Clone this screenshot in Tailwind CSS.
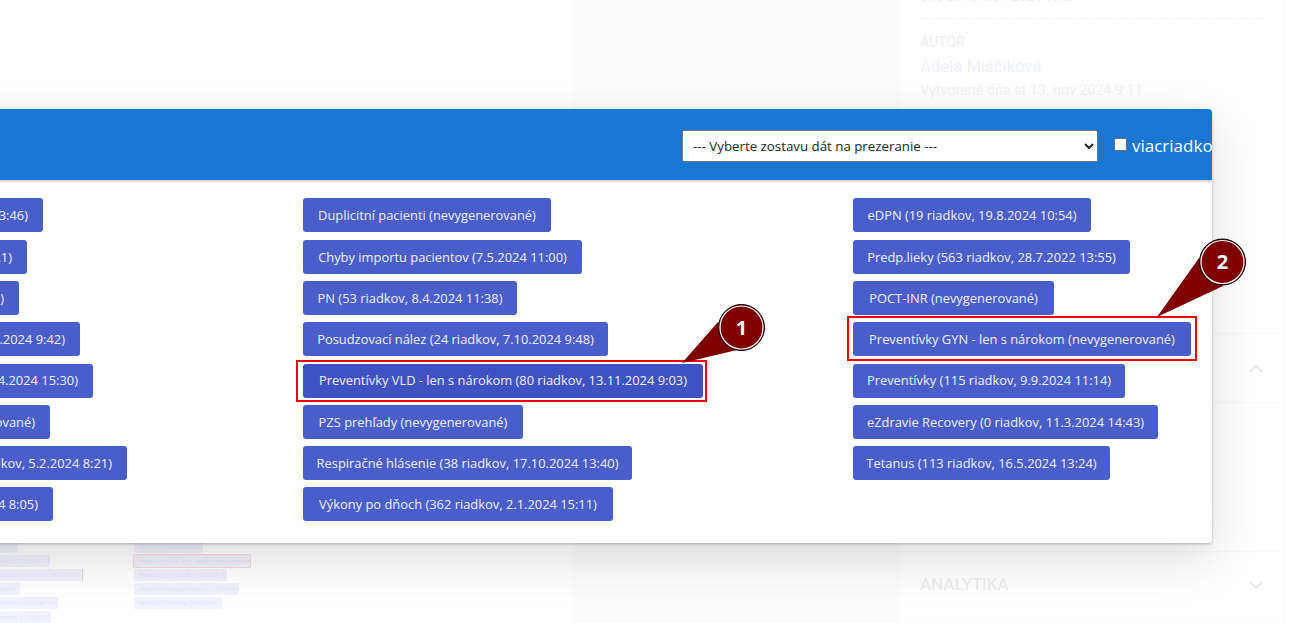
<!DOCTYPE html>
<html lang="sk">
<head>
  <meta charset="UTF-8">
  <title>Zostavy</title>
  <script src="https://cdn.jsdelivr.net/npm/@tailwindcss/browser@4"></script>
</head>
<body class="bg-white overflow-hidden font-['Open_Sans',sans-serif]">
<div class="relative w-[1305px] h-[623px] overflow-hidden bg-white">

  <!-- stranka za oknom -->
  <div class="absolute left-[573px] top-0 w-[326px] h-[623px] bg-[#fcfcfc]"></div>
  <div class="absolute left-[899px] top-[-30px] w-[385px] h-[700px] bg-white border-x border-[#fafafa] font-['Roboto',sans-serif]">
    <div class="mx-5 pt-[16px] pb-[12px] border-b border-dashed border-[#f0f0f0] text-[#f0f0f0] text-sm">dňa st 13. nov 2024 9:12</div>
    <div class="mx-5 mt-[13px] text-sm leading-5 text-[#eeeeee]">AUTOR</div>
    <div class="mx-5 mt-[3px] text-[16.7px] leading-6 text-[#edf2fd]">Adela Miščiková</div>
    <div class="mx-5 mt-[1px] text-[14.3px] leading-5 text-[#f3f3f3]">Vytvorené dňa st 13. nov 2024 9:11</div>
    <div class="mt-[233px] h-[70px] border-y border-[#f8f8f8] flex items-center justify-end pr-[20px]">
      <svg width="14" height="9" viewBox="0 0 14 9" fill="none" stroke="#e8ebee" stroke-width="2"><path d="M1 8l6-6 6 6"/></svg>
    </div>
    <div class="h-[148px]"></div>
    <div class="h-[68px] border-y border-[#f8f8f8] flex items-center justify-between pl-[20px] pr-[20px]">
      <span class="text-[17px] text-[#ebebeb]">ANALYTIKA</span>
      <svg width="14" height="9" viewBox="0 0 14 9" fill="none" stroke="#e8ebee" stroke-width="2"><path d="M1 1l6 6 6-6"/></svg>
    </div>
  </div>

  <!-- zmensena kopia obrazka pod oknom -->
  <div class="absolute left-0 top-[541px] w-[260px] grid grid-cols-[134px_1fr] text-[5px] leading-[12px] text-[#4a5ec9]/10 blur-[0.7px] whitespace-nowrap">
    <div class="flex flex-col w-[84px] gap-[2px] overflow-hidden">
      <div class="h-[12px] w-[18px] bg-[#4a5ec9]/8 overflow-hidden">8:41</div>
      <div class="h-[12px] w-[50px] bg-[#4a5ec9]/8 overflow-hidden">adkov, 7.10.2024 9:48</div>
      <div class="h-[12px] w-[83px] bg-[#4a5ec9]/8 border-r border-[#f00000]/15 overflow-hidden">nárokom (80 riadkov, 13.11.2024 9:03)</div>
      <div class="h-[12px] w-[20px] bg-[#4a5ec9]/8 overflow-hidden">rované</div>
      <div class="h-[12px] w-[58px] bg-[#4a5ec9]/8 overflow-hidden">riadkov, 17.10.2024 13:40</div>
      <div class="h-[12px] w-[51px] bg-[#4a5ec9]/8 overflow-hidden">riadkov, 2.1.2024 15:11</div>
    </div>
    <div class="flex flex-col items-start gap-[2px] pr-[2px]">
      <div class="h-[12px] w-[69px] bg-[#4a5ec9]/8 overflow-hidden pl-[5px]">POCT-INR (nevygenerované)</div>
      <div class="h-[12px] w-[116px] bg-[#4a5ec9]/8 outline outline-[#f00000]/15 overflow-hidden pl-[5px]">Preventívky GYN - len s nárokom (nevygenerované)</div>
      <div class="h-[12px] w-[93px] bg-[#4a5ec9]/8 overflow-hidden pl-[5px]">Preventívky (115 riadkov, 9.9.2024 11:14)</div>
      <div class="h-[12px] w-[105px] bg-[#4a5ec9]/8 overflow-hidden pl-[5px]">eZdravie Recovery (0 riadkov, 11.3.2024 14:43)</div>
      <div class="h-[12px] w-[88px] bg-[#4a5ec9]/8 overflow-hidden pl-[5px]">Tetanus (113 riadkov, 16.5.2024 13:24)</div>
    </div>
  </div>

  <!-- okno -->
  <div class="absolute left-[-262px] top-[109px] w-[1474px] h-[434px] bg-white rounded-[4px] overflow-hidden shadow-[0_1px_3px_rgba(0,0,0,0.25),0_16px_50px_rgba(0,0,0,0.14)]">
    <div class="h-[71px] bg-[#1976d2] flex items-center pt-[3px] pl-[944px] shadow-[0_1px_3px_rgba(0,0,0,0.3)]">
      <select class="shrink-0 w-[416px] h-[32px] bg-white border border-[#767676] rounded-[2px] pl-[6px] text-[13.3px] text-[#212529]">
        <option>--- Vyberte zostavu dát na prezeranie ---</option>
      </select>
      <label class="flex items-center ml-[16px] text-white text-[17px] whitespace-nowrap">
        <span class="w-[13px] h-[13px] bg-white border border-[#767676] rounded-[2px] mr-[5px] mb-[3px]"></span>viacriadkov
      </label>
    </div>

    <div class="grid grid-cols-[565px_550px_1fr] pt-[18.4px] text-[12.9px] text-[#eef0fc]">
      <!-- prvy stlpec, zlava odrezany okrajom okna -->
      <div class="flex flex-col gap-[7.3px] pl-[15px]">
        <div class="w-[290px] h-[34px] pt-px flex items-center justify-end px-[15px] rounded-[3px] bg-[#4a5ec9] overflow-hidden whitespace-nowrap">Analýza (12 riadkov, 3.5.2024 13:46)</div>
        <div class="w-[274px] h-[34px] pt-px flex items-center justify-end px-[15px] rounded-[3px] bg-[#4a5ec9] overflow-hidden whitespace-nowrap">Ambulancia (8 riadkov, 3.5.2024 8:21)</div>
        <div class="w-[266px] h-[34px] pt-px flex items-center justify-end px-[15px] rounded-[3px] bg-[#4a5ec9] overflow-hidden whitespace-nowrap">Dekurzy (nevygenerované 0)</div>
        <div class="w-[327px] h-[34px] pt-px flex items-center justify-end px-[15px] rounded-[3px] bg-[#4a5ec9] overflow-hidden whitespace-nowrap">Diagnózy (240 riadkov, 7.10.2024 9:42)</div>
        <div class="w-[340px] h-[34px] pt-px flex items-center justify-end px-[15px] rounded-[3px] bg-[#4a5ec9] overflow-hidden whitespace-nowrap">Dispenzarizácia (31 riadkov, 24.4.2024 15:30)</div>
        <div class="w-[297px] h-[34px] pt-px flex items-center justify-end px-[15px] rounded-[3px] bg-[#4a5ec9] overflow-hidden whitespace-nowrap">Očkovanie (nevygenerované)</div>
        <div class="w-[374px] h-[34px] pt-px flex items-center justify-end px-[15px] rounded-[3px] bg-[#4a5ec9] overflow-hidden whitespace-nowrap">Objednávky pacientov (95 riadkov, 5.2.2024 8:21)</div>
        <div class="w-[300px] h-[34px] pt-px flex items-center justify-end px-[15px] rounded-[3px] bg-[#4a5ec9] overflow-hidden whitespace-nowrap">Pacienti (87 riadkov, 2.1.2024 8:05)</div>
      </div>

      <div class="flex flex-col items-start gap-[7.3px]">
        <div class="w-[248px] h-[34px] pt-px flex items-center justify-center rounded-[3px] bg-[#4a5ec9] whitespace-nowrap">Duplicitní pacienti (nevygenerované)</div>
        <div class="w-[279px] h-[34px] pt-px flex items-center justify-center rounded-[3px] bg-[#4a5ec9] whitespace-nowrap">Chyby importu pacientov (7.5.2024 11:00)</div>
        <div class="w-[214px] h-[34px] pt-px flex items-center justify-center rounded-[3px] bg-[#4a5ec9] whitespace-nowrap">PN (53 riadkov, 8.4.2024 11:38)</div>
        <div class="w-[305px] h-[34px] pt-px flex items-center justify-center rounded-[3px] bg-[#4a5ec9] whitespace-nowrap">Posudzovací nález (24 riadkov, 7.10.2024 9:48)</div>
        <div class="relative w-[400px] h-[34px] pt-px flex items-center justify-center rounded-[3px] bg-[#3f52c2] whitespace-nowrap">Preventívky VLD - len s nárokom (80 riadkov, 13.11.2024 9:03)
          <span class="absolute left-[-7px] right-[-4px] top-[-4px] bottom-[-4px] border-2 border-[#f00000]"></span>
        </div>
        <div class="w-[220px] h-[34px] pt-px flex items-center justify-center rounded-[3px] bg-[#4a5ec9] whitespace-nowrap">PZS prehľady (nevygenerované)</div>
        <div class="w-[329px] h-[34px] pt-px flex items-center justify-center rounded-[3px] bg-[#4a5ec9] whitespace-nowrap">Respiračné hlásenie (38 riadkov, 17.10.2024 13:40)</div>
        <div class="w-[310px] h-[34px] pt-px flex items-center justify-center rounded-[3px] bg-[#4a5ec9] whitespace-nowrap">Výkony po dňoch (362 riadkov, 2.1.2024 15:11)</div>
      </div>

      <div class="flex flex-col items-start gap-[7.3px]">
        <div class="w-[238px] h-[34px] pt-px flex items-center justify-center rounded-[3px] bg-[#4a5ec9] whitespace-nowrap">eDPN (19 riadkov, 19.8.2024 10:54)</div>
        <div class="w-[277px] h-[34px] pt-px flex items-center justify-center rounded-[3px] bg-[#4a5ec9] whitespace-nowrap">Predp.lieky (563 riadkov, 28.7.2022 13:55)</div>
        <div class="w-[201px] h-[34px] pt-px flex items-center justify-center rounded-[3px] bg-[#4a5ec9] whitespace-nowrap">POCT-INR (nevygenerované)</div>
        <div class="relative w-[338px] h-[34px] pt-px flex items-center justify-center rounded-[3px] bg-[#4a5ec9] whitespace-nowrap">Preventívky GYN - len s nárokom (nevygenerované)
          <span class="absolute left-[-6px] right-[-6px] top-[-6px] bottom-[-5px] border-2 border-[#f00000]"></span>
        </div>
        <div class="w-[272px] h-[34px] pt-px flex items-center justify-center rounded-[3px] bg-[#4a5ec9] whitespace-nowrap">Preventívky (115 riadkov, 9.9.2024 11:14)</div>
        <div class="w-[305px] h-[34px] pt-px flex items-center justify-center rounded-[3px] bg-[#4a5ec9] whitespace-nowrap">eZdravie Recovery (0 riadkov, 11.3.2024 14:43)</div>
        <div class="w-[257px] h-[34px] pt-px flex items-center justify-center rounded-[3px] bg-[#4a5ec9] whitespace-nowrap">Tetanus (113 riadkov, 16.5.2024 13:24)</div>
      </div>
    </div>
  </div>

  <!-- ciselne znacky -->
  <svg class="absolute left-0 top-0 pointer-events-none" width="1305" height="623" viewBox="0 0 1305 623">
    <path d="M718 322L682 363L737 350Z" fill="#7f0000"/>
    <circle cx="741.5" cy="327.5" r="23" fill="#7f0000" stroke="#000" stroke-width="1"/>
    <circle cx="741.5" cy="327.5" r="21.5" fill="none" stroke="#fff" stroke-width="1.2"/>
    <text x="741.5" y="334.5" text-anchor="middle" fill="#fff" font-family="Open Sans" font-weight="700" font-size="20">1</text>
    <path d="M1199 258L1157 317L1223 286Z" fill="#7f0000"/>
    <circle cx="1222.5" cy="262" r="23" fill="#7f0000" stroke="#000" stroke-width="1"/>
    <circle cx="1222.5" cy="262" r="21.5" fill="none" stroke="#fff" stroke-width="1.2"/>
    <text x="1222.5" y="269" text-anchor="middle" fill="#fff" font-family="Open Sans" font-weight="700" font-size="20">2</text>
  </svg>
</div>
</body>
</html>
